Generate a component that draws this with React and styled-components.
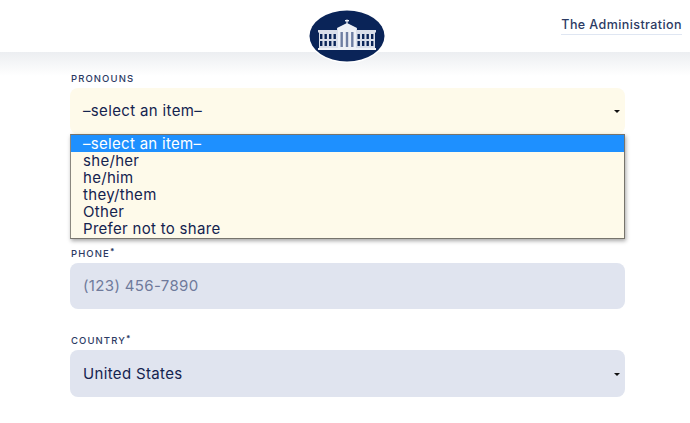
import React from "react";
import styled, { createGlobalStyle } from "styled-components";

const GlobalStyle = createGlobalStyle`
    html, body {
        margin: 0;
        padding: 0;
        background: #fff;
        overflow: hidden;
    }
    body {
        font-family: Inter, "Open Sans", sans-serif;
        color: #14234f;
    }
`

const Page = styled.div`
    width: 690px;
    height: 423px;
    overflow: hidden;
`
const Header = styled.header`
    position: relative;
    height: 52px;
    background: #fff;
    display: flex;
    justify-content: flex-end;
    align-items: flex-start;
    padding: 16px 8px 0 0;
    box-sizing: border-box;
`
const LogoBadge = styled.a`
    position: absolute;
    left: 308px;
    top: 9px;
    width: 78px;
    height: 54px;
`
const NavLink = styled.a`
    font-size: 12.5px;
    font-weight: 500;
    line-height: 17px;
    letter-spacing: 0.42px;
    color: #2c3a63;
    padding-bottom: 1px;
    border-bottom: 1px solid #dfe6f2;
`
const Shade = styled.div`
    height: 24px;
    margin-bottom: -24px;
    background: linear-gradient(#eceef1, #fff);
`
const Form = styled.form`
    position: relative;
    padding: 21px 65px 0 70px;
    display: flex;
    flex-direction: column;
`
const Field = styled.div`
    position: relative;
    margin-bottom: ${props => props.$gap}px;
`
const Label = styled.label`
    display: block;
    padding-left: 1px;
    font-size: 9.5px;
    font-weight: 500;
    line-height: 12px;
    height: 12px;
    margin-bottom: 3px;
    letter-spacing: 1.1px;
    text-transform: uppercase;
    color: #2c3a63;
    sup {
        font-size: 8px;
        font-weight: 700;
        line-height: 0;
        vertical-align: 3px;
    }
`
const Box = styled.div`
    height: ${props => props.$height || 46}px;
    box-sizing: border-box;
    padding: 0 5px ${props => (props.$height ? 1 : 2)}px 13px;
    border-radius: 8px;
    background: ${props => (props.$tone === "cream" ? "#fefaea" : "#e0e4ef")};
    display: flex;
    align-items: center;
    justify-content: space-between;
    font-size: 15px;
    letter-spacing: 0.35px;
    color: ${props => (props.$muted ? "#6f7a9b" : "#14234f")};
`
const Arrow = styled.span`
    width: 0;
    height: 0;
    margin-top: 2px;
    border-left: 3px solid transparent;
    border-right: 3px solid transparent;
    border-top: 3.5px solid #111;
`
const Dropdown = styled.ul`
    position: absolute;
    left: 0;
    right: 0;
    top: 61px;
    margin: 0;
    padding: 0;
    list-style: none;
    box-sizing: border-box;
    height: 105px;
    background: #fefaea;
    border: 1px solid #77746c;
    border-left-color: #8a877e;
    box-shadow: 1px 2px 4px rgba(0, 0, 0, 0.35);
    z-index: 2;
`
const Option = styled.li`
    height: 17px;
    line-height: 17px;
    padding-left: 12px;
    font-size: 15px;
    letter-spacing: 0.3px;
    color: ${props => (props.$selected ? "#fff" : "#14234f")};
    background: ${props => (props.$selected ? "#1e90ff" : "transparent")};
`

const options = ["–select an item–", "she/her", "he/him", "they/them", "Other", "Prefer not to share"];

function Logo() {
    const windows = [];
    for (const x of [12, 16.5, 21, 25.5, 49.5, 54, 58.5, 63]) {
        windows.push(<rect key={x} x={x} y="25" width="2.4" height="5" fill="#0a2458" />);
        windows.push(<rect key={x + "b"} x={x} y="32" width="2.4" height="5" fill="#0a2458" />);
    }
    return (
        <svg width="78" height="54" viewBox="0 0 78 54">
            <ellipse cx="39" cy="27" rx="39" ry="27" fill="#fff" />
            <ellipse cx="39" cy="27" rx="37.5" ry="25.5" fill="#0a2458" />
            <path d="M10 21h19v-2h20v2h19v2.5H10z" fill="#d9deea" />
            <rect x="11" y="23" width="56" height="16" fill="#d9deea" />
            <path d="M29 19l10-5 10 5z" fill="#eef1f7" />
            <rect x="38.4" y="10.5" width="1.2" height="4" fill="#eef1f7" />
            <rect x="37" y="11" width="4" height="1.4" fill="#eef1f7" />
            <rect x="30" y="19" width="18" height="21" fill="#eef1f7" />
            {windows}
            <rect x="32.5" y="23" width="2.4" height="15" fill="#6f7fa3" />
            <rect x="37.8" y="23" width="2.4" height="15" fill="#6f7fa3" />
            <rect x="43.1" y="23" width="2.4" height="15" fill="#6f7fa3" />
            <rect x="10" y="39" width="58" height="2" fill="#eef1f7" />
        </svg>
    );
}

export default function App() {
    return (
        <Page>
            <GlobalStyle />
            <Header>
                <NavLink>The Administration</NavLink>
                <LogoBadge><Logo /></LogoBadge>
            </Header>
            <Shade />
            <Form>
                <Field $gap={114}>
                    <Label>Pronouns</Label>
                    <Box $tone="cream">
                        –select an item–
                        <Arrow />
                    </Box>
                    <Dropdown>
                        {options.map((o, i) => (
                            <Option key={o} $selected={i === 0}>{o}</Option>
                        ))}
                    </Dropdown>
                </Field>
                <Field $gap={26}>
                    <Label>Phone<sup>*</sup></Label>
                    <Box $muted>(123) 456-7890</Box>
                </Field>
                <Field $gap={0}>
                    <Label>Country<sup>*</sup></Label>
                    <Box $height={47}>
                        United States
                        <Arrow />
                    </Box>
                </Field>
            </Form>
        </Page>
    );
}
